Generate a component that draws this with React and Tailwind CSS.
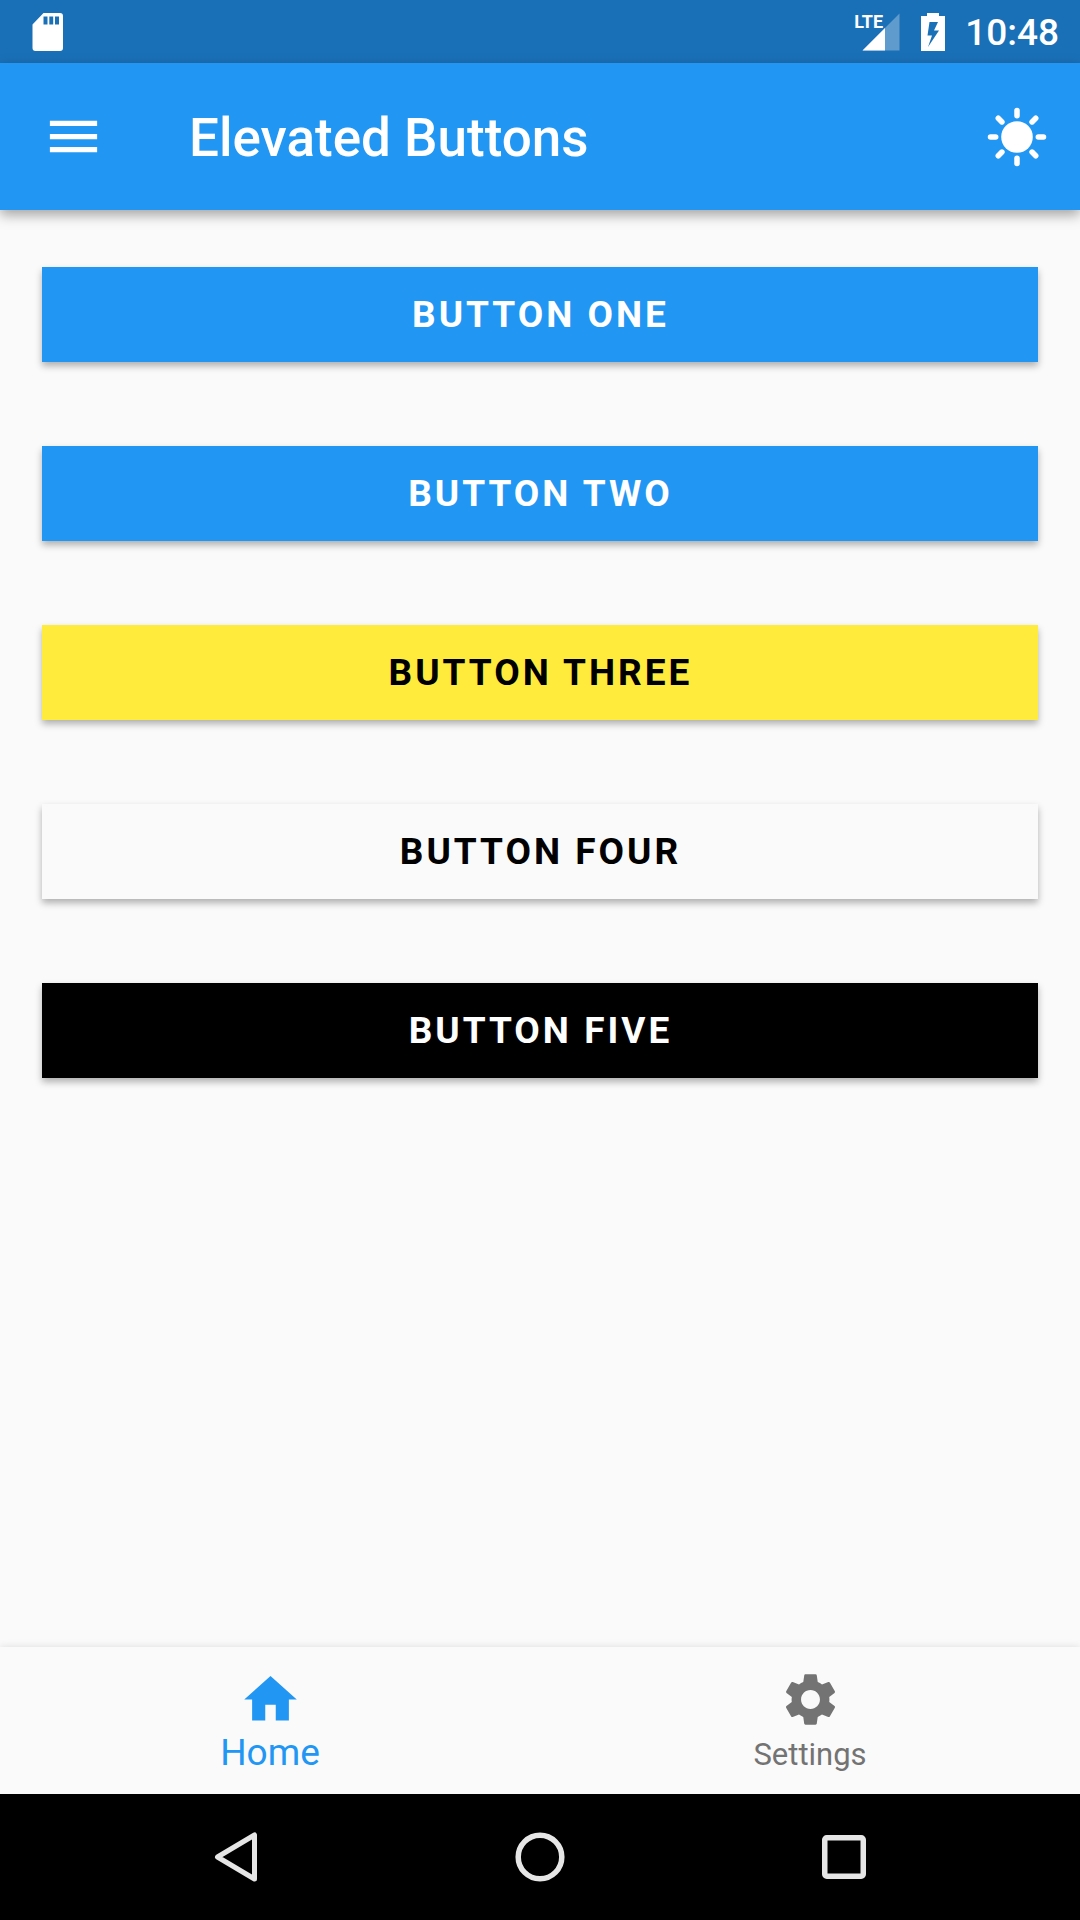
import { MdHome, MdMenu, MdSettings } from "react-icons/md";

const buttons = [
  { label: "Button One", tone: "bg-[#2196f3] text-white" },
  { label: "Button Two", tone: "bg-[#2196f3] text-white" },
  { label: "Button Three", tone: "bg-[#ffeb3b] text-black" },
  { label: "Button Four", tone: "bg-[#fafafa] text-black" },
  { label: "Button Five", tone: "bg-black text-white" },
];

const rayAngles = [0, 45, 90, 135, 180, 225, 270, 315];

function SdCardIcon() {
  return (
    <svg viewBox="0 0 32 40" className="h-10 w-8 fill-white" role="img" aria-label="SD card">
      <path
        fillRule="evenodd"
        d="M12.500 1H29a3 3 0 0 1 3 3V36a3 3 0 0 1-3 3H4.500a3 3 0 0 1-3-3V12.500ZM12.500 4.500V12.500H16.500V4.500ZM18.300 4.500V12.500H22.200V4.500ZM24 4.500V12.500H28V4.500Z"
      />
    </svg>
  );
}

function SignalIcon() {
  return (
    <div className="relative h-[38px] w-[46px]">
      <svg viewBox="0 0 46 38" className="size-full fill-white" aria-hidden="true">
        <path d="M45.500 0.500V37.500H8.500Z" opacity="0.3" />
        <path d="M31 15V37.500H8.500Z" />
      </svg>
      <span className="absolute top-0 left-0 font-['Liberation_Sans_Narrow','Roboto',sans-serif] text-[18px] leading-[18px] font-bold">
        LTE
      </span>
    </div>
  );
}

function BatteryIcon() {
  return (
    <svg viewBox="0 0 24 38" className="h-[38px] w-6 fill-white" role="img" aria-label="Battery charging">
      <path fillRule="evenodd" d="M6 0H18V3H24V38H0V3H6ZM8.500 9L6.500 22.500H11L7 34L18 17.500H13L17 9Z" />
    </svg>
  );
}

function SunIcon() {
  return (
    <svg viewBox="-32 -32 64 64" className="size-16" aria-hidden="true">
      <circle r="15.800" className="fill-white" />
      {rayAngles.map((angle) => (
        <line
          key={angle}
          y1="-21.300"
          y2="-26.500"
          transform={`rotate(${angle})`}
          className="stroke-white stroke-[5.5]"
          strokeLinecap="round"
        />
      ))}
    </svg>
  );
}

export default function App() {
  return (
    <div className="flex min-h-screen flex-col bg-[#fafafa] font-['Roboto',sans-serif]">
      <div className="flex h-[63px] items-center justify-between bg-[#1a70b7] pr-[21px] pl-[31px] text-white">
        <SdCardIcon />
        <div className="flex items-center">
          <SignalIcon />
          <div className="ml-[21px] flex">
            <BatteryIcon />
          </div>
          <time className="ml-5 pt-[3px] text-[37px] leading-10 font-medium">10:48</time>
        </div>
      </div>

      <header className="flex h-[147px] items-center bg-[#2196f3] pr-[31px] pl-[42px] text-white shadow-[0_5px_12px_rgba(0,0,0,0.35)]">
        <button type="button" aria-label="Open menu">
          <MdMenu className="size-[63px]" />
        </button>
        <h1 className="ml-21 flex-1 pt-[3px] text-[53px] leading-16 font-medium">Elevated Buttons</h1>
        <button type="button" aria-label="Toggle theme">
          <SunIcon />
        </button>
      </header>

      <main className="flex flex-1 flex-col gap-[84px] px-[42px] pt-[57px]">
        {buttons.map(({ label, tone }) => (
          <button
            key={label}
            type="button"
            className={`h-[95px] pt-px pl-px text-[37px] leading-10 font-bold tracking-[3px] uppercase shadow-[0_4px_7px_rgba(0,0,0,0.3)] ${tone}`}
          >
            {label}
          </button>
        ))}
      </main>

      <nav className="grid h-[147px] grid-cols-2 bg-[#fafafa] pt-[21px] shadow-[0_0_8px_rgba(0,0,0,0.12)]">
        <a href="#home" aria-current="page" className="flex flex-col items-center text-[#2196f3]">
          <MdHome className="size-[63px]" />
          <span className="text-[37px] leading-[44px]">Home</span>
        </a>
        <a href="#settings" className="flex flex-col items-center text-[#737373]">
          <MdSettings className="size-[63px]" />
          <span className="text-[31px] leading-12">Settings</span>
        </a>
      </nav>

      <div className="flex h-[126px] items-center justify-around bg-black px-[84px]">
        <button type="button" aria-label="Back">
          <svg viewBox="0 0 54 54" className="size-[54px] fill-none stroke-[#e6e6e6] stroke-[5]" strokeLinejoin="round">
            <path d="M45.500 5V49L8.500 27Z" />
          </svg>
        </button>
        <button type="button" aria-label="Home screen">
          <svg viewBox="0 0 54 54" className="size-[54px] fill-none stroke-[#e6e6e6] stroke-[5.5]">
            <circle cx="27" cy="27" r="21.800" />
          </svg>
        </button>
        <button type="button" aria-label="Recent apps">
          <svg viewBox="0 0 54 54" className="size-[54px] fill-none stroke-[#e6e6e6] stroke-[5.5]">
            <rect x="7.750" y="7.750" width="38.500" height="38.500" rx="2" />
          </svg>
        </button>
      </div>
    </div>
  );
}
